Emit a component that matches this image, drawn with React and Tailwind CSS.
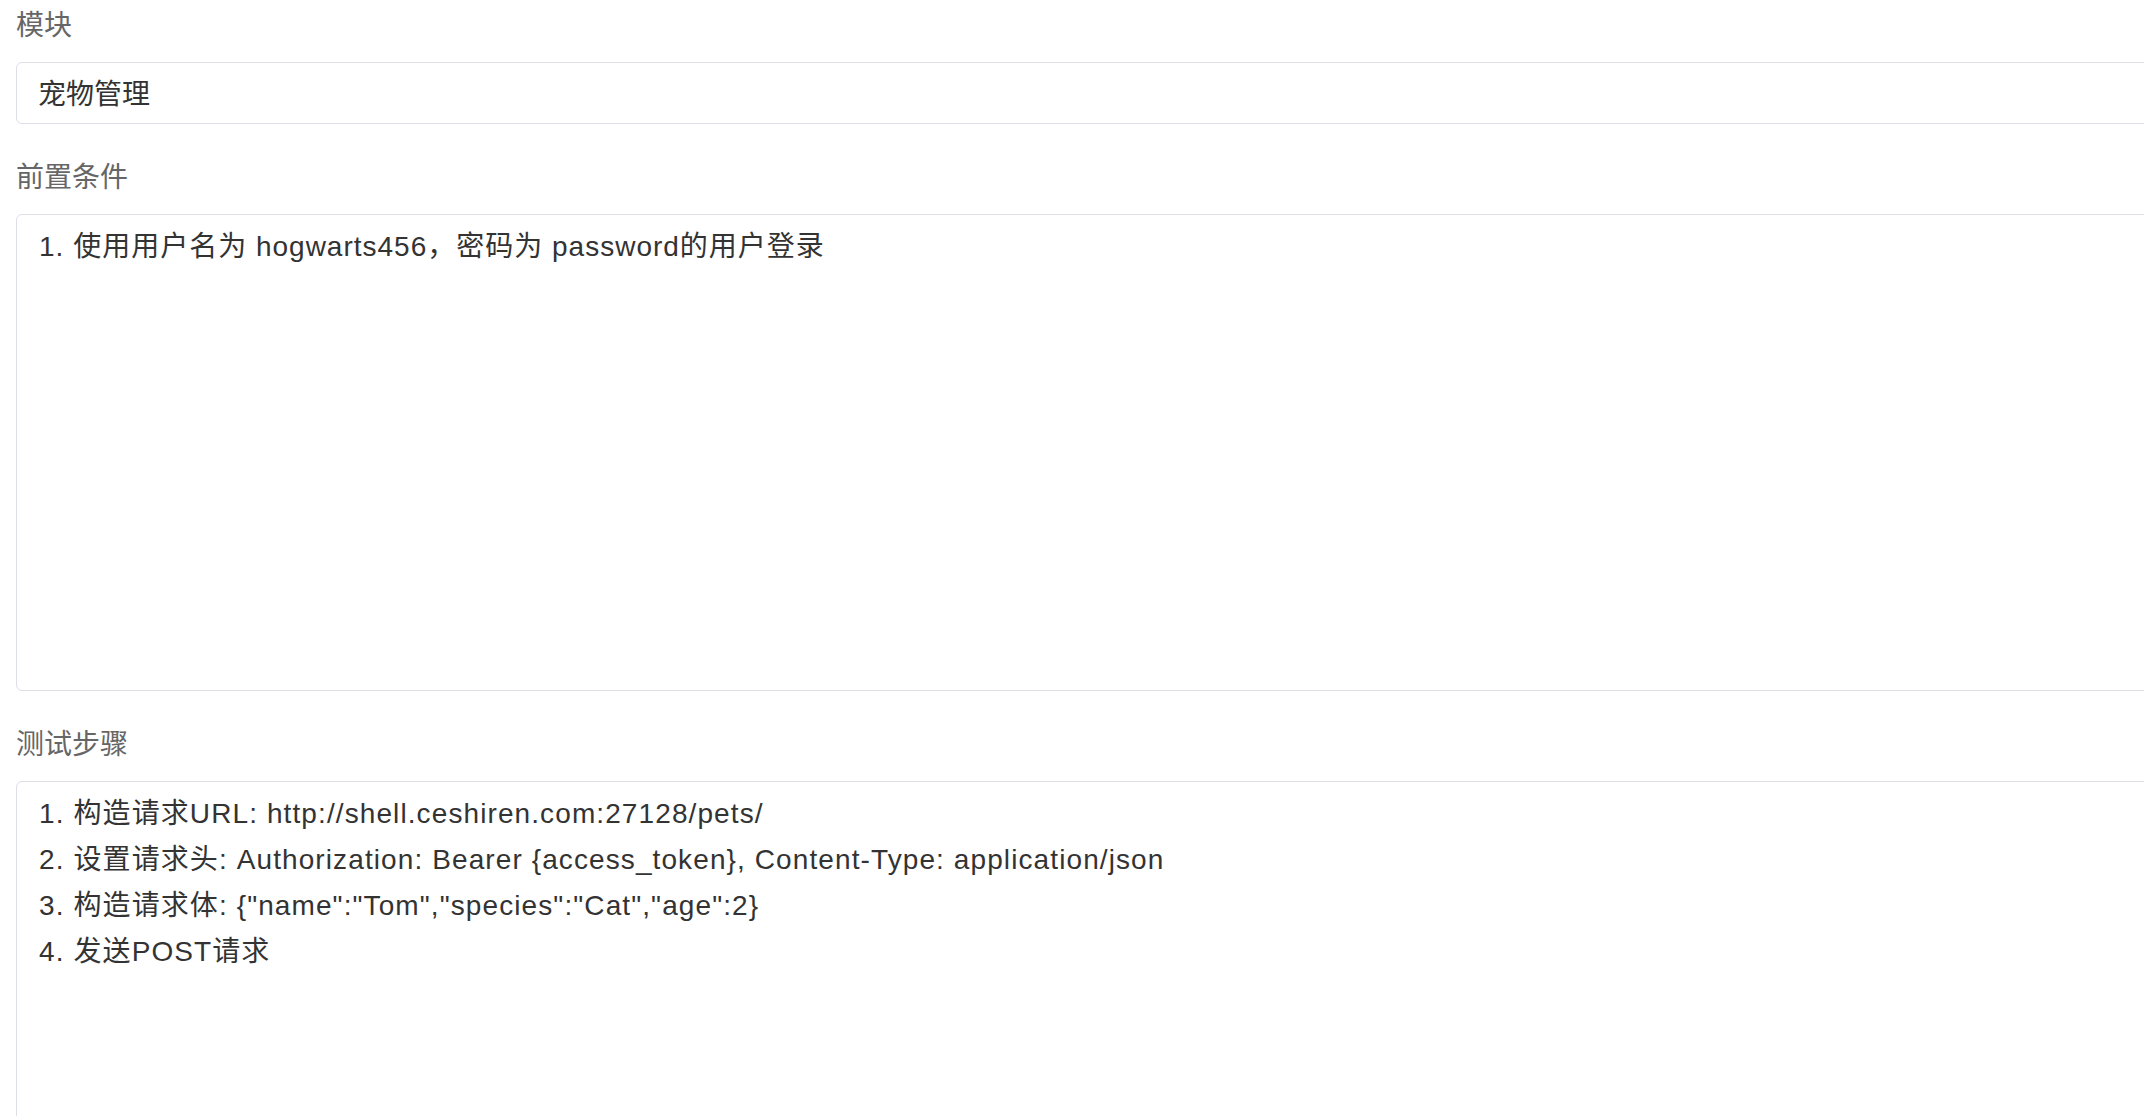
import React from "react";

const font = {
    fontFamily: '"Liberation Sans", "Noto Sans CJK SC", sans-serif',
};

const steps = [
    "1. 构造请求URL: http://shell.ceshiren.com:27128/pets/",
    "2. 设置请求头: Authorization: Bearer {access_token}, Content-Type: application/json",
    '3. 构造请求体: {"name":"Tom","species":"Cat","age":2}',
    "4. 发送POST请求",
];

const Label = ({ children }) => (
    <div className="text-[28px] leading-[40px] text-[#666666] mb-[16px]">{children}</div>
);

export default function App() {
    return (
        <div
            className="h-[1116px] w-full overflow-hidden bg-white pl-[16px] pt-[6px]"
            style={font}
        >
            {/* 模块 */}
            <Label>模块</Label>
            <div className="h-[62px] mr-[-30px] flex items-center border border-[#dcdfe6] rounded-[6px] pl-[21px] pt-[3px] text-[28px] text-[#333333]">
                宠物管理
            </div>

            {/* 前置条件 */}
            <div className="mt-[34px]">
                <Label>前置条件</Label>
                <div className="h-[477px] mr-[-30px] border border-[#dcdfe6] rounded-[6px] pl-[22px] pt-[9px] text-[28px] leading-[46px] tracking-[1px] text-[#333333]">
                    1. 使用用户名为 hogwarts456，密码为 password的用户登录
                </div>
            </div>

            {/* 测试步骤 */}
            <div className="mt-[34px]">
                <Label>测试步骤</Label>
                <div className="h-[477px] mr-[-30px] border border-[#dcdfe6] rounded-[6px] pl-[22px] pt-[9px] text-[28px] leading-[46px] tracking-[1.1px] text-[#333333]">
                    {steps.map((line) => (
                        <div key={line}>{line}</div>
                    ))}
                </div>
            </div>
        </div>
    );
}
